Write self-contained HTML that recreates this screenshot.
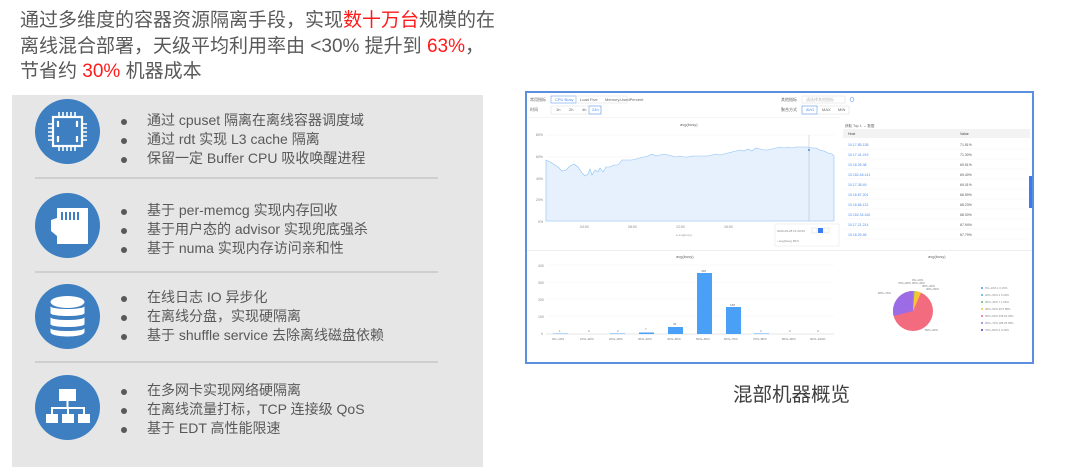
<!DOCTYPE html>
<html><head><meta charset="utf-8"><style>
*{margin:0;padding:0;box-sizing:border-box}
body{width:1080px;height:467px;background:#fff;position:relative;overflow:hidden;font-family:"Liberation Sans","Noto Sans CJK SC",sans-serif;color:#595959}
.hd{position:absolute;left:20px;top:8px;font-size:19px;line-height:25.5px;color:#595959;white-space:nowrap}
.r{color:#ff1a1a}
.panel{position:absolute;left:12px;top:95px;width:471px;height:372px;background:#e6e6e6}
.c{position:absolute;left:23px;width:65px;height:65px;border-radius:50%;background:#3d7fc1}
.c svg{position:absolute;left:0;top:0}
.ul{position:absolute;left:107px;font-size:14px;line-height:19px;color:#595959}
.ul div{position:relative;padding-left:28px}
.ul div:before{content:"";position:absolute;left:2px;top:8px;width:6px;height:6px;border-radius:50%;background:#595959}
.sep{position:absolute;left:23px;width:403px;height:2px;background:#cfcfcf}
.cap{position:absolute;left:733px;top:378px;font-size:19.5px;color:#404040}
.dash{position:absolute;left:525px;top:91px;width:509px;height:273px;border:2px solid #5b8fe0;background:#fff}
</style></head><body>
<div class="hd">通过多维度的容器资源隔离手段，实现<span class="r">数十万台</span>规模的在<br>离线混合部署，天级平均利用率由 &lt;30% 提升到 <span class="r">63%</span>，<br>节省约 <span class="r">30%</span> 机器成本</div>
<div class="panel">
 <div class="c" style="top:4px"><svg width="65" height="65" viewBox="0 0 65 65" fill="none" stroke="#fff" stroke-width="2.2">
  <rect x="18" y="18" width="29" height="29"/>
  <path d="M24 23h-1v5M41 23h1v5M24 42h-1v-5M41 42h1v-5"/>
  <path d="M24 18v-5M28 18v-5M32 18v-5M36 18v-5M40 18v-5M24 47v5M28 47v5M32 47v5M36 47v5M40 47v5M18 25h-5M18 29h-5M18 33h-5M18 37h-5M18 41h-5M47 25h5M47 29h5M47 33h5M47 37h5M47 41h5" stroke-width="1.6"/></svg></div>
 <div class="ul" style="top:16px"><div>通过 cpuset 隔离在离线容器调度域</div><div>通过 rdt 实现 L3 cache 隔离</div><div>保留一定 Buffer CPU 吸收唤醒进程</div></div>
 <div class="sep" style="top:82px"></div>
 <div class="c" style="top:98px"><svg width="65" height="65" viewBox="0 0 65 65"><path d="M22 15h31v36H22v-8l-6-5V27l6-2z" fill="#fff"/><path d="M27 19v8M31 19v8M35 19v8M39 19v8M43 19v8" stroke="#3d7fc1" stroke-width="2"/></svg></div>
 <div class="ul" style="top:106px"><div>基于 per-memcg 实现内存回收</div><div>基于用户态的 advisor 实现兜底强杀</div><div>基于 numa 实现内存访问亲和性</div></div>
 <div class="sep" style="top:176px"></div>
 <div class="c" style="top:189px"><svg width="65" height="65" viewBox="0 0 65 65" fill="#fff"><ellipse cx="32.5" cy="18" rx="17" ry="6"/><path d="M15.5 22c0 4 34 4 34 0v7c0 4-34 4-34 0z"/><path d="M15.5 33c0 4 34 4 34 0v7c0 4-34 4-34 0z"/><path d="M15.5 44c0 4 34 4 34 0v4c0 6-34 6-34 0z"/></svg></div>
 <div class="ul" style="top:193px"><div>在线日志 IO 异步化</div><div>在离线分盘，实现硬隔离</div><div>基于 shuffle service 去除离线磁盘依赖</div></div>
 <div class="sep" style="top:266px"></div>
 <div class="c" style="top:280px"><svg width="65" height="65" viewBox="0 0 65 65" fill="#fff"><rect x="24" y="14" width="17" height="12"/><rect x="11" y="39" width="12" height="9"/><rect x="27" y="39" width="12" height="9"/><rect x="43" y="39" width="12" height="9"/><path d="M32.5 26v7M17 39v-6h32v6M33 33v6" stroke="#fff" stroke-width="2" fill="none"/></svg></div>
 <div class="ul" style="top:286px"><div>在多网卡实现网络硬隔离</div><div>在离线流量打标，TCP 连接级 QoS</div><div>基于 EDT 高性能限速</div></div>
</div>

<div class="dash">
<svg width="505" height="269" viewBox="527 93 505 269" style="position:absolute;left:0;top:0;font-family:'Liberation Sans',sans-serif">
 <g font-size="4" fill="#666">
  <text x="530" y="101">常用指标</text><rect x="551" y="96" width="25" height="7" fill="none" stroke="#4d8ef0" stroke-width=".5"/><text x="555" y="101" fill="#4d8ef0">CPU Busy</text>
  <rect x="576" y="96" width="51" height="7" fill="none" stroke="#ddd" stroke-width=".5"/><text x="580" y="101">Load Five</text><text x="605" y="101">Memory.UsedPercent</text>
  <text x="530" y="111">时间</text>
  <rect x="551" y="106" width="50" height="8" fill="none" stroke="#ddd" stroke-width=".5"/><text x="556" y="111">1h</text><text x="569" y="111">2h</text><text x="582" y="111">4h</text><rect x="589" y="106" width="12" height="8" fill="none" stroke="#4d8ef0" stroke-width=".5"/><text x="592" y="111" fill="#4d8ef0">24h</text>
  <text x="781" y="101">其他指标</text><rect x="802" y="96" width="43" height="7" fill="none" stroke="#ddd" stroke-width=".5"/><text x="806" y="101" fill="#bbb">请选择其他指标</text>
  <circle cx="852" cy="99.5" r="2" fill="none" stroke="#4d8ef0" stroke-width=".5"/>
  <text x="781" y="111">聚合方式</text><rect x="802" y="106" width="47" height="8" fill="none" stroke="#ddd" stroke-width=".5"/><rect x="802" y="106" width="15" height="8" fill="none" stroke="#4d8ef0" stroke-width=".5"/><text x="806" y="111" fill="#4d8ef0">AVG</text><text x="822" y="111">MAX</text><text x="838" y="111">MIN</text>
 </g>
 <rect x="527" y="117" width="313" height="0.6" fill="#eee"/>
 <text x="680" y="126" font-size="4" fill="#666">avg(busy)</text>
 <g font-size="3.5" fill="#888"><text x="536" y="136">80%</text><text x="536" y="158">60%</text><text x="536" y="180">40%</text><text x="536" y="201">20%</text><text x="538" y="223">0%</text>
 <text x="580" y="228">04:00</text><text x="628" y="228">08:00</text><text x="676" y="228">12:00</text><text x="724" y="228">16:00</text></g>
 <g stroke="#f0f0f0" stroke-width=".5"><path d="M546 135H834M546 157H834M546 178H834M546 200H834"/></g>
 <path d="M546 221H834" stroke="#ddd" stroke-width=".5"/>
 <path d="M546 160L552 163 558 167 562 171 566 170 570 166 574 164 578 167 582 173 585 176 588 174 590 169 592 175 595 170 598 172 600 168 603 172 606 167 610 167 614 165 618 165 622 160 627 160 632 160 636 159 640 158 644 157 648 156 652 154 656 156 660 155 664 154 668 155 672 156 676 157 680 156 684 157 688 157 692 156 696 156 700 156 704 156 708 156 712 155 716 154 720 155 724 154 728 153 732 152 736 151 740 150 744 151 748 149 752 151 756 148 760 149 764 150 768 150 772 149 776 148 780 147 784 148 788 147 792 148 796 147 800 147 804 147 808 147 812 148 816 148 820 150 824 151 828 153 832 154 834 156L834 221 546 221Z" fill="#e6f1fd" stroke="#8ec1f5" stroke-width=".6"/>
 <path d="M809 135V221" stroke="#aaa" stroke-width=".4"/><circle cx="809" cy="150" r="1" fill="#3d8ef0"/>
 <text x="676" y="236" font-size="3" fill="#999">● avg(busy)</text>
 <rect x="775" y="224" width="64" height="22" fill="#fff" stroke="#e5e5e5" stroke-width=".5"/>
 <text x="777" y="232" font-size="3" fill="#888">2020-09-28 21:20:00</text><rect x="812" y="228" width="5" height="5" fill="#fff" stroke="#ccc" stroke-width=".4"/><rect x="818" y="228" width="5" height="5" fill="#3a7cf0"/><rect x="824" y="228" width="5" height="5" fill="#fff" stroke="#ccc" stroke-width=".4"/>
 <text x="777" y="242" font-size="3" fill="#888">• avg(busy)               66%</text>
 <text x="845" y="127" font-size="3.5" fill="#666">获取 Top  1.  ⌄  数据</text>
 <rect x="843" y="129" width="187" height="9" fill="#f3f3f3"/>
 <text x="848" y="135" font-size="3.5" fill="#444">Host</text><text x="960" y="135" font-size="3.5" fill="#444">Value</text>
 <g font-size="3.5" fill="#4d8ef0">
  <text x="848" y="146">10.17.85.138</text><text x="848" y="156">10.17.41.219</text><text x="848" y="166">10.16.26.38</text><text x="848" y="176">10.152.46.141</text><text x="848" y="186">10.17.38.49</text><text x="848" y="196">10.16.87.201</text><text x="848" y="206">10.16.66.131</text><text x="848" y="216">10.152.34.162</text><text x="848" y="226">10.17.21.214</text><text x="848" y="236">10.16.25.46</text></g>
 <g font-size="3.5" fill="#555">
  <text x="960" y="146">71.51%</text><text x="960" y="156">71.30%</text><text x="960" y="166">69.51%</text><text x="960" y="176">69.40%</text><text x="960" y="186">69.01%</text><text x="960" y="196">68.59%</text><text x="960" y="206">68.23%</text><text x="960" y="216">68.00%</text><text x="960" y="226">67.94%</text><text x="960" y="236">67.79%</text></g>
 <g stroke="#f0f0f0" stroke-width=".4"><path d="M843 149H1030M843 159H1030M843 169H1030M843 179H1030M843 189H1030M843 199H1030M843 209H1030M843 219H1030M843 229H1030M843 239H1030"/></g>
 <rect x="1029" y="176" width="4" height="32" fill="#3a7cf0"/>
 <rect x="527" y="250" width="505" height="1" fill="#eee"/>
 <text x="676" y="258" font-size="4" fill="#666">avg(busy)</text><text x="928" y="258" font-size="4" fill="#666">avg(busy)</text>
 <g font-size="3.5" fill="#888"><text x="538" y="267">400</text><text x="538" y="284">300</text><text x="538" y="301">200</text><text x="538" y="318">100</text><text x="541" y="335">0</text></g>
 <g stroke="#f0f0f0" stroke-width=".4"><path d="M546 265H834M546 282H834M546 299H834M546 316H834"/></g>
 <path d="M546 334H834" stroke="#ccc" stroke-width=".5"/>
 <g fill="#4aa0f7"><rect x="553" y="333.6" width="15" height=".4"/><rect x="610" y="333.5" width="15" height=".5"/><rect x="639" y="332.5" width="15" height="1.5"/><rect x="668" y="327" width="15" height="7"/><rect x="697" y="273" width="15" height="61"/><rect x="726" y="307" width="15" height="27"/><rect x="754" y="333.5" width="15" height=".5"/></g>
 <g font-size="3" fill="#777"><text x="559" y="332">1</text><text x="588" y="332">0</text><text x="617" y="332">2</text><text x="645" y="330">7</text><text x="673" y="325">39</text><text x="701" y="272">438</text><text x="730" y="306">188</text><text x="760" y="332">2</text><text x="789" y="332">0</text><text x="817" y="332">0</text>
 <text x="552" y="340">0%~10%</text><text x="580" y="340">10%~20%</text><text x="609" y="340">20%~30%</text><text x="638" y="340">30%~40%</text><text x="667" y="340">40%~50%</text><text x="696" y="340">50%~60%</text><text x="724" y="340">60%~70%</text><text x="753" y="340">70%~80%</text><text x="782" y="340">80%~90%</text><text x="810" y="340">90%~100%</text></g>
 <circle cx="913" cy="311" r="20" fill="#f36b7f"/>
 <path d="M913 311L893.6 316A20 20 0 0 1 913 291Z" fill="#9b6ce6"/>
 <path d="M913 311L913 291A20 20 0 0 1 921 292.6Z" fill="#f7c531"/>
 <path d="M913 311L913 291A20 20 0 0 1 914.5 291Z" fill="#3db9c8"/>
 <g font-size="2.8" fill="#777"><text x="898" y="284">70%~80%</text><text x="912" y="281">0%~10%</text><text x="912" y="284">20%~30%</text><text x="922" y="287">30%~40%</text><text x="926" y="290">40%~50%</text><text x="878" y="294">60%~70%</text><text x="925" y="331">50%~60%</text></g>
 <g font-size="2.8" fill="#888"><circle cx="982" cy="288" r="1" fill="#4d8ef0"/><text x="985" y="289">0%~10%  1    0.15%</text><circle cx="982" cy="295" r="1" fill="#3db9c8"/><text x="985" y="296">20%~30% 2    0.30%</text><circle cx="982" cy="302" r="1" fill="#4ec46a"/><text x="985" y="303">30%~40% 7    1.06%</text><circle cx="982" cy="309" r="1" fill="#f7c531"/><text x="985" y="310">40%~50% 39   5.88%</text><circle cx="982" cy="316" r="1" fill="#f36b7f"/><text x="985" y="317">50%~60% 438  64.23%</text><circle cx="982" cy="323" r="1" fill="#9b6ce6"/><text x="985" y="324">60%~70% 188  28.05%</text><circle cx="982" cy="330" r="1" fill="#3f3fc9"/><text x="985" y="331">70%~80% 2    0.30%</text></g>
</svg>
</div>
<div class="cap">混部机器概览</div>
</body></html>
